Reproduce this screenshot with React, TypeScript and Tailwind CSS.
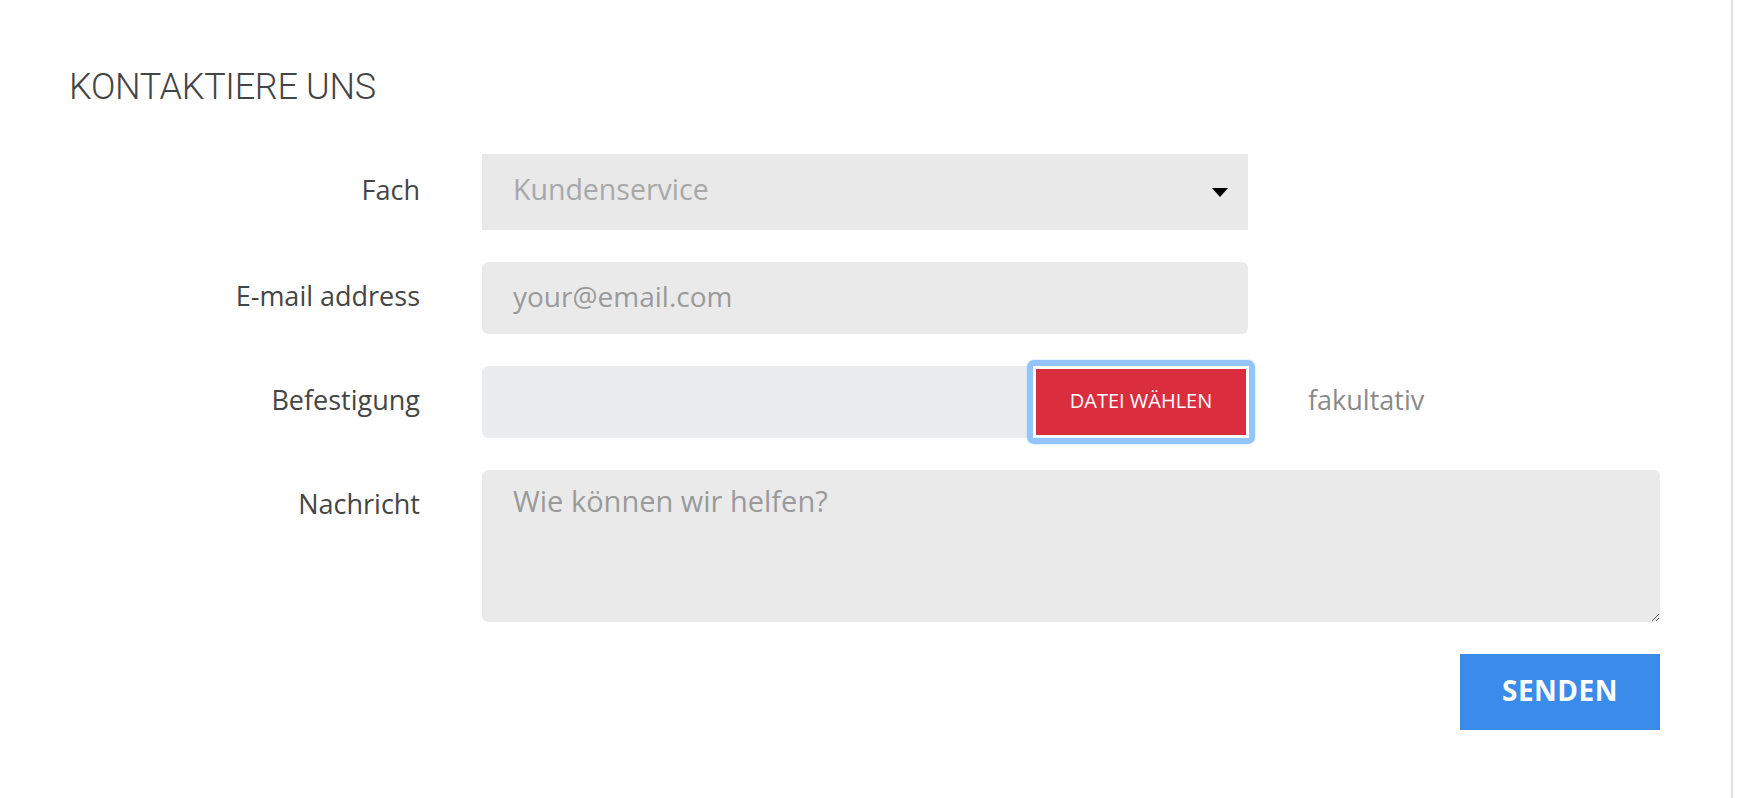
import React from "react";

const labelCls =
  "flex justify-end text-[27px] leading-[36px] text-[#454545] font-['Open_Sans',sans-serif]";

export default function App() {
  return (
    <div className="min-h-screen bg-white">
      <div className="w-[1733px] min-h-[798px] border-r-2 border-[#e1e1e1] pl-[69px] pt-[67px]">
        {/* Titel */}
        <h1 className="font-['Roboto',sans-serif] font-light text-[36px] leading-[41px] tracking-[-0.3px] text-[#444]">
          KONTAKTIERE UNS
        </h1>

        <form
          className="mt-[46px] grid grid-cols-[351px_1178px] gap-x-[62px] gap-y-[32px]"
          onSubmit={(e) => e.preventDefault()}
        >
          {/* Fach */}
          <label className={`${labelCls} items-center pb-[5px]`}>Fach</label>
          <div className="relative w-[766px] h-[76px] bg-[#e9e9e9]">
            <select
              defaultValue="kundenservice"
              className="w-full h-full appearance-none bg-transparent pl-[31px] pr-[50px] pb-[5px] text-[28.5px] text-[#a8a8a8] font-['Open_Sans',sans-serif] outline-none"
            >
              <option value="kundenservice">Kundenservice</option>
              <option value="technik">Technik</option>
              <option value="rechnung">Rechnung</option>
            </select>
            <svg
              className="absolute right-[20px] top-[34px] pointer-events-none"
              width="16"
              height="9"
              viewBox="0 0 16 9"
            >
              <polygon points="0,0 16,0 8,9" fill="#000" />
            </svg>
          </div>

          {/* E-Mail */}
          <label className={`${labelCls} items-center pb-[4px]`}>E-mail address</label>
          <input
            type="email"
            placeholder="your@email.com"
            className="w-[766px] h-[72px] rounded-[6px] bg-[#eaeaea] pl-[31px] pb-[4px] text-[28px] text-[#444] placeholder:text-[#9a9a9a] font-['Open_Sans',sans-serif] outline-none"
          />

          {/* Befestigung */}
          <label className={`${labelCls} items-center pb-[4px]`}>Befestigung</label>
          <div className="flex items-center">
            <div className="w-[766px] h-[72px] rounded-[6px] bg-[#ebecee] flex items-center justify-end pr-[2px]">
              <div className="relative">
                <span className="absolute -inset-[9px] rounded-[7px] border-[6px] border-[#93c4fc] shadow-[0_0_2px_#a9d0fd] pointer-events-none" />
                <button
                  type="button"
                  className="relative w-[210px] h-[66px] bg-[#da2e3f] shadow-[0_0_0_3px_#fff] text-white text-[20px] pb-[2px] font-['Open_Sans',sans-serif]"
                >
                  DATEI WÄHLEN
                </button>
              </div>
            </div>
            <span className="ml-[60px] pb-[4px] text-[27px] text-[#8a8a8a] font-['Open_Sans',sans-serif]">
              fakultativ
            </span>
          </div>

          {/* Nachricht */}
          <label className={`${labelCls} items-start pt-[16px]`}>Nachricht</label>
          <textarea
            placeholder="Wie können wir helfen?"
            className="block w-[1178px] h-[152px] rounded-[6px] bg-[#eaeaea] pl-[31px] pt-[12px] text-[29px] leading-[38px] text-[#444] placeholder:text-[#9a9a9a] font-['Open_Sans',sans-serif] outline-none resize-y"
          />

          {/* Senden */}
          <div />
          <div className="flex justify-end">
            <button
              type="submit"
              className="w-[200px] h-[76px] bg-[#3b8beb] pb-[5px] text-white text-[28px] font-bold tracking-[0.5px] font-['Open_Sans',sans-serif]"
            >
              SENDEN
            </button>
          </div>
        </form>
      </div>
    </div>
  );
}
